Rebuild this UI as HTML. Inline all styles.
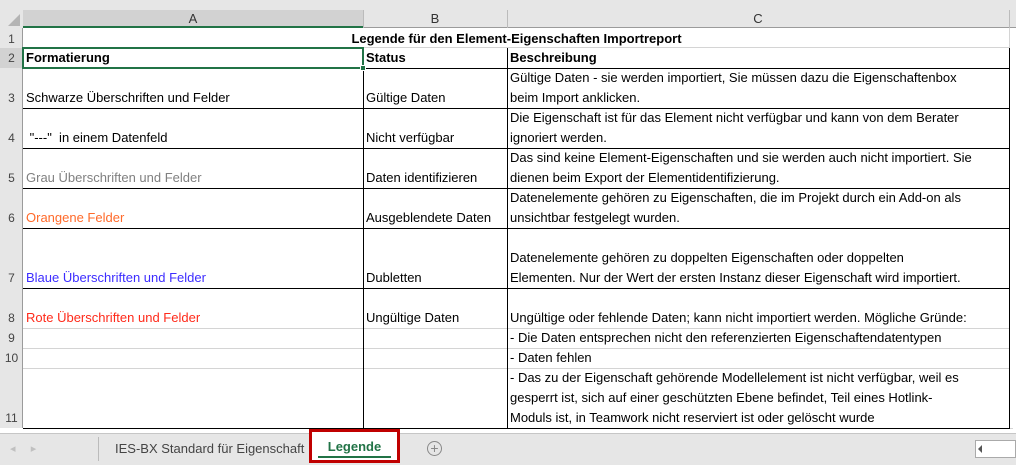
<!DOCTYPE html>
<html><head><meta charset="utf-8"><style>
*{margin:0;padding:0;box-sizing:border-box}
body{width:1016px;height:465px;overflow:hidden;background:#fff;font-family:"Liberation Sans",sans-serif;font-size:13px;position:relative;color:#000}
.a{position:absolute}
.t{position:absolute;white-space:nowrap;line-height:20px}
.hl{position:absolute;height:1px;background:#000}
.vl{position:absolute;width:1px;background:#000}
.rn{position:absolute;left:0;width:23px;text-align:center;color:#444;font-size:12px;line-height:20px}
.b{font-weight:bold}
</style></head><body>
<div class="a" style="left:0;top:0;width:1016px;height:10px;background:#e6e6e6"></div>
<div class="a" style="left:0;top:10px;width:1016px;height:18px;background:#e6e6e6;border-bottom:1px solid #9b9b9b"></div>
<div class="a" style="left:23px;top:10px;width:340px;height:18px;background:#d2d2d2;border-bottom:2px solid #217346"></div>
<div class="a" style="left:363px;top:10px;width:1px;height:18px;background:#bbb"></div>
<div class="a" style="left:507px;top:10px;width:1px;height:18px;background:#bbb"></div>
<div class="a" style="left:1009px;top:10px;width:1px;height:18px;background:#bbb"></div>
<div class="t" style="left:23px;top:9px;width:340px;text-align:center;color:#333">A</div>
<div class="t" style="left:363px;top:9px;width:144px;text-align:center;color:#333">B</div>
<div class="t" style="left:507px;top:9px;width:502px;text-align:center;color:#333">C</div>
<div class="a" style="left:0;top:10px;width:23px;height:18px;background:#e6e6e6"></div>
<div class="a" style="left:8px;top:14px;width:0;height:0;border-left:12px solid transparent;border-bottom:12px solid #b4b4b4"></div>
<div class="a" style="left:0;top:28px;width:23px;height:400px;background:#e6e6e6;border-right:1px solid #9b9b9b"></div>
<div class="a" style="left:0;top:48px;width:23px;height:20px;background:#d2d2d2"></div>
<div class="rn" style="top:29px">1</div><div class="rn" style="top:48px">2</div>
<div class="rn" style="top:88px">3</div><div class="rn" style="top:128px">4</div>
<div class="rn" style="top:168px">5</div><div class="rn" style="top:208px">6</div>
<div class="rn" style="top:268px">7</div><div class="rn" style="top:308px">8</div>
<div class="rn" style="top:328px">9</div><div class="rn" style="top:348px">10</div>
<div class="rn" style="top:408px">11</div>
<div class="a" style="left:1009px;top:28px;width:1px;height:400px;background:#d4d4d4"></div>
<div class="a" style="left:23px;top:428px;width:990px;height:5px;border-top:1px solid #d4d4d4"></div>
<div class="hl" style="left:23px;top:47px;width:987px;background:#d4d4d4"></div>
<div class="hl" style="left:23px;top:68px;width:987px"></div>
<div class="hl" style="left:23px;top:108px;width:987px"></div>
<div class="hl" style="left:23px;top:148px;width:987px"></div>
<div class="hl" style="left:23px;top:188px;width:987px"></div>
<div class="hl" style="left:23px;top:228px;width:987px"></div>
<div class="hl" style="left:23px;top:288px;width:987px"></div>
<div class="hl" style="left:23px;top:328px;width:987px;background:#d4d4d4"></div>
<div class="hl" style="left:23px;top:348px;width:987px;background:#d4d4d4"></div>
<div class="hl" style="left:23px;top:368px;width:987px;background:#d4d4d4"></div>
<div class="hl" style="left:23px;top:428px;width:987px"></div>
<div class="vl" style="left:363px;top:48px;height:381px"></div>
<div class="vl" style="left:507px;top:48px;height:381px"></div>
<div class="vl" style="left:1009px;top:48px;height:381px"></div>
<div class="a" style="left:22px;top:47px;width:342px;height:22px;border:2px solid #217346"></div>
<div class="a" style="left:360px;top:65px;width:6px;height:6px;background:#217346;border:1px solid #fff"></div>
<div class="t b" style="left:23px;top:29px;width:987px;text-align:center">Legende für den Element-Eigenschaften Importreport</div>
<div class="t b" style="left:26px;top:48px">Formatierung</div>
<div class="t b" style="left:366px;top:48px">Status</div>
<div class="t b" style="left:510px;top:48px">Beschreibung</div>
<div class="t" style="left:26px;top:88px">Schwarze Überschriften und Felder</div>
<div class="t" style="left:26px;top:128px">&nbsp;"---"&nbsp; in einem Datenfeld</div>
<div class="t" style="left:26px;top:168px;color:#808080">Grau Überschriften und Felder</div>
<div class="t" style="left:26px;top:208px;color:#ff6a2a">Orangene Felder</div>
<div class="t" style="left:26px;top:268px;color:#3c2cff">Blaue Überschriften und Felder</div>
<div class="t" style="left:26px;top:308px;color:#ff2a1a">Rote Überschriften und Felder</div>
<div class="t" style="left:366px;top:88px">Gültige Daten</div>
<div class="t" style="left:366px;top:128px">Nicht verfügbar</div>
<div class="t" style="left:366px;top:168px">Daten identifizieren</div>
<div class="t" style="left:366px;top:208px">Ausgeblendete Daten</div>
<div class="t" style="left:366px;top:268px">Dubletten</div>
<div class="t" style="left:366px;top:308px">Ungültige Daten</div>
<div class="t" style="left:510px;top:68px">Gültige Daten - sie werden importiert, Sie müssen dazu die Eigenschaftenbox</div>
<div class="t" style="left:510px;top:88px">beim Import anklicken.</div>
<div class="t" style="left:510px;top:108px">Die Eigenschaft ist für das Element nicht verfügbar und kann von dem Berater</div>
<div class="t" style="left:510px;top:128px">ignoriert werden.</div>
<div class="t" style="left:510px;top:148px">Das sind keine Element-Eigenschaften und sie werden auch nicht importiert. Sie</div>
<div class="t" style="left:510px;top:168px">dienen beim Export der Elementidentifizierung.</div>
<div class="t" style="left:510px;top:188px">Datenelemente gehören zu Eigenschaften, die im Projekt durch ein Add-on als</div>
<div class="t" style="left:510px;top:208px">unsichtbar festgelegt wurden.</div>
<div class="t" style="left:510px;top:248px">Datenelemente gehören zu doppelten Eigenschaften oder doppelten</div>
<div class="t" style="left:510px;top:268px">Elementen. Nur der Wert der ersten Instanz dieser Eigenschaft wird importiert.</div>
<div class="t" style="left:510px;top:308px">Ungültige oder fehlende Daten; kann nicht importiert werden. Mögliche Gründe:</div>
<div class="t" style="left:510px;top:328px">- Die Daten entsprechen nicht den referenzierten Eigenschaftendatentypen</div>
<div class="t" style="left:510px;top:348px">- Daten fehlen</div>
<div class="t" style="left:510px;top:368px">- Das zu der Eigenschaft gehörende Modellelement ist nicht verfügbar, weil es</div>
<div class="t" style="left:510px;top:388px">gesperrt ist, sich auf einer geschützten Ebene befindet, Teil eines Hotlink-</div>
<div class="t" style="left:510px;top:408px">Moduls ist, in Teamwork nicht reserviert ist oder gelöscht wurde</div>
<div class="a" style="left:0;top:433px;width:1016px;height:32px;background:#e6e6e6;border-top:1px solid #c6c6c6"></div>
<div class="t" style="left:10px;top:439px;color:#c0c0c0;font-size:11px">◂&nbsp;&nbsp;&nbsp;&nbsp;&nbsp;▸</div>
<div class="a" style="left:98px;top:437px;width:1px;height:24px;background:#bbb"></div>
<div class="t" style="left:115px;top:439px;color:#444">IES-BX Standard für Eigenschaft</div>
<div class="a" style="left:309px;top:429px;width:91px;height:34px;border:3px solid #c00000;background:#fff"></div>
<div class="a" style="left:318px;top:456px;width:73px;height:2px;background:#217346"></div>
<div class="t b" style="left:309px;top:437px;width:91px;text-align:center;color:#217346">Legende</div>
<div class="a" style="left:427px;top:441px;width:15px;height:15px;border:1px solid #888;border-radius:50%;color:#888;font-size:14px;line-height:12px;text-align:center">+</div>
<div class="a" style="left:975px;top:440px;width:41px;height:18px;background:#fff;border:1px solid #aaa"></div>
<div class="a" style="left:978px;top:445px;width:0;height:0;border-top:4px solid transparent;border-bottom:4px solid transparent;border-right:4px solid #555"></div>
</body></html>
